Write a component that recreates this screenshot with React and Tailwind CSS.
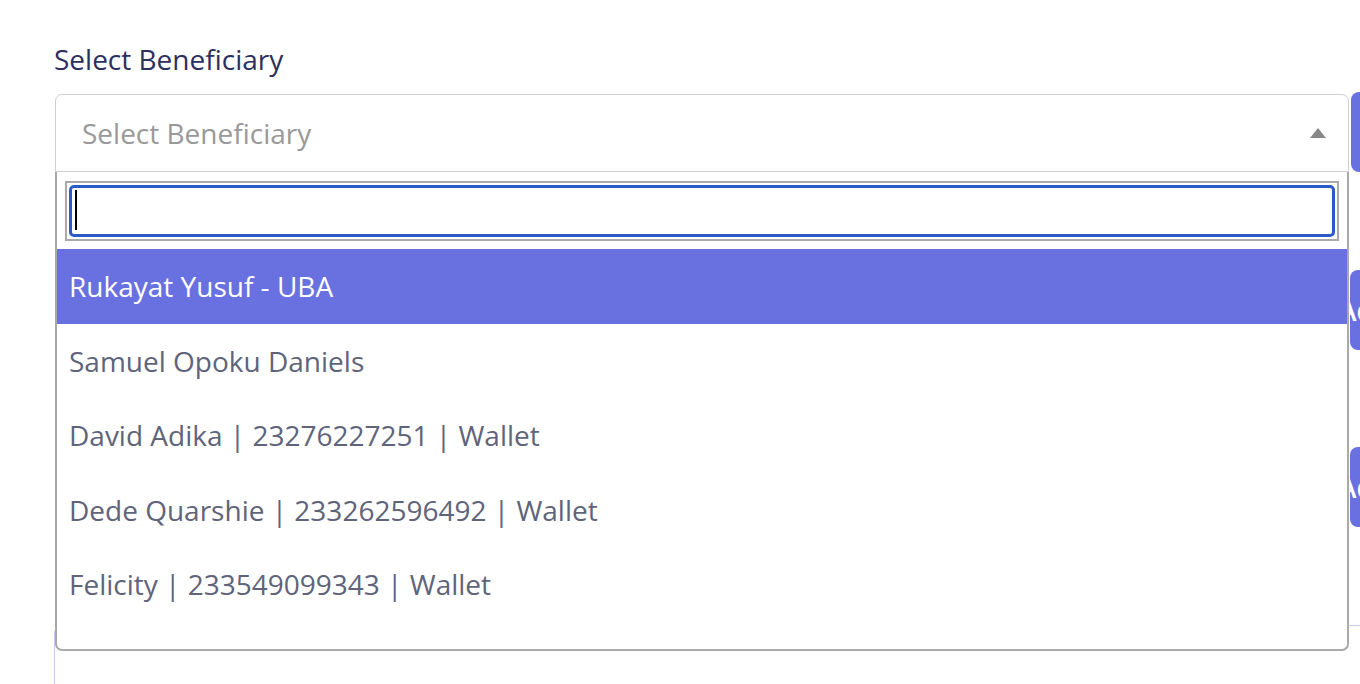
import React from "react";

const options = [
  "Rukayat Yusuf - UBA",
  "Samuel Opoku Daniels",
  "David Adika | 23276227251 | Wallet",
  "Dede Quarshie | 233262596492 | Wallet",
  "Felicity | 233549099343 | Wallet",
  "Felicia A | 13462002670 | Wallet",
];

export default function App() {
  return (
    <div
      className="relative h-[684px] w-[1360px] overflow-hidden bg-white pl-[55px] pt-[40px]"
      style={{ fontFamily: '"Open Sans", sans-serif' }}
    >
      <div className="-ml-[1px] text-[28px] leading-[38px] text-[#2d2f5e]">Select Beneficiary</div>

      <div className="mt-[16px] flex">
        <div className="relative w-[1294px] shrink-0">
          <div className="flex h-[78px] items-center justify-between rounded-t-[7px] border border-[#cfcfcf] pl-[26px] pr-[22px]">
            <span className="text-[28px] text-[#999999]">Select Beneficiary</span>
            <span className="h-0 w-0 border-x-[8px] border-b-[10px] border-x-transparent border-b-[#888888]" />
          </div>

          <div className="absolute left-0 top-full z-10 w-[1294px] overflow-hidden rounded-b-[7px] border-2 border-t-0 border-[#aaaaaa] bg-white">
            <div className="px-[8px] pt-[9px] pb-[8px]">
              <div className="border-2 border-[#aaaaaa] p-[2px]">
                <div className="relative h-[52px] rounded-[5px] border-[3px] border-[#2a5bc6]">
                  <div className="absolute left-[3px] top-[2px] h-[40px] w-[2px] bg-black" />
                </div>
              </div>
            </div>
            <div className="h-[400px] overflow-hidden">
              {options.map((o, i) => (
                <div
                  key={o}
                  className={
                    "flex h-[74.5px] items-center pl-[12px] text-[28px] " +
                    (i === 0 ? "bg-[#6970e0] text-white" : "text-[#60647a]")
                  }
                >
                  {o}
                </div>
              ))}
            </div>
          </div>
        </div>
        <div className="-mt-[2px] ml-[2px] flex h-[80px] w-[120px] shrink-0 items-center rounded-l-[8px] bg-[#6970e0]" />
      </div>

      <div className="mt-[98px] flex">
        <div className="w-[1295px] shrink-0" />
        <div className="flex h-[80px] w-[140px] shrink-0 items-center rounded-l-[8px] bg-[#6970e0] text-[28px] font-semibold text-white">
          <span className="-ml-[12px]">Add</span>
        </div>
      </div>

      <div className="mt-[97px] flex">
        <div className="w-[1295px] shrink-0" />
        <div className="flex h-[80px] w-[140px] shrink-0 items-center rounded-l-[8px] bg-[#6970e0] text-[28px] font-semibold text-white">
          <span className="-ml-[12px]">Add</span>
        </div>
      </div>

      <div className="mt-[98px] -ml-[1px] h-[200px] w-[1400px] rounded-tl-[8px] border border-[#c8c9ee]" />
    </div>
  );
}
